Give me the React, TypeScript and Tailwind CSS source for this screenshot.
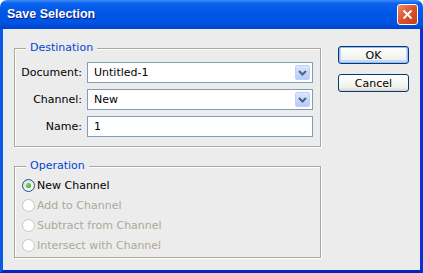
import React from "react";

const face = "font-['DejaVu_Sans',sans-serif] text-[11px] leading-[13px]";

function GroupBox({
  title,
  className,
  children,
}: {
  title: string;
  className: string;
  children: React.ReactNode;
}) {
  return (
    <div
      className={`relative border border-[#aca899] shadow-[inset_1px_1px_0_#ffffff,1px_1px_0_#ffffff] ${className}`}
    >
      <span className="absolute left-[11px] -top-[8px] bg-[#ececec] px-[4px] text-[#0046d5]">
        {title}
      </span>
      {children}
    </div>
  );
}

function ComboBox({ value }: { value: string }) {
  return (
    <div className="relative flex h-[21px] w-[226px] items-center border border-[#7f9db9] bg-white pl-[6px]">
      {value}
      <div className="absolute right-[2px] top-[2px] bottom-[2px] flex w-[15px] items-center justify-center rounded-[2px] border border-[#bcd0f8] bg-[linear-gradient(to_bottom,#dce6fd,#b7cbf8)]">
        <svg width="9" height="6" viewBox="0 0 9 6">
          <path d="M1 1 L4.5 4.5 L8 1" fill="none" stroke="#4d6185" strokeWidth="2" />
        </svg>
      </div>
    </div>
  );
}

function Field({ label, children }: { label: string; children: React.ReactNode }) {
  return (
    <div className="flex items-center gap-[5px]">
      <div className="w-[67px] text-right">{label}</div>
      {children}
    </div>
  );
}

function Radio({ label, checked, disabled }: { label: string; checked?: boolean; disabled?: boolean }) {
  return (
    <div className={`flex h-[20px] items-center gap-[2px] ${disabled ? "text-[#aca899]" : "text-black"}`}>
      <div
        className={`flex h-[13px] w-[13px] items-center justify-center rounded-full border ${
          disabled
            ? "border-[#cac8bb] bg-white"
            : "border-[#1c5180] bg-[linear-gradient(135deg,#dcdcd6,#ffffff)]"
        }`}
      >
        {checked && (
          <div className="h-[5px] w-[5px] rounded-full bg-[radial-gradient(circle_at_35%_35%,#71e070,#21a121)]" />
        )}
      </div>
      <span>{label}</span>
    </div>
  );
}

function Button({ label, primary }: { label: string; primary?: boolean }) {
  return (
    <div
      className={`flex h-[18px] w-[71px] items-center justify-center rounded-[3px] border border-[#003c74] bg-[linear-gradient(to_bottom,#ffffff,#f0f0ea_80%,#d6d0c5)] ${
        primary ? "shadow-[inset_0_0_0_1px_#9bb8f3,inset_0_-1px_0_2px_#c5d8fa]" : ""
      }`}
    >
      {label}
    </div>
  );
}

export default function App() {
  return (
    <div className={`flex h-[273px] w-[423px] flex-col ${face}`}>
      <div className="flex h-[29px] shrink-0 items-center justify-between rounded-t-[7px] bg-[linear-gradient(to_bottom,#3d8ef7_0%,#0a62ee_12%,#0056e6_45%,#0054e3_80%,#0042cc_100%)] pl-[7px] pr-[5px]">
        <span className="font-['Liberation_Sans',sans-serif] text-[12.5px] font-bold text-white [text-shadow:1px_1px_0_#0a1883]">
          Save Selection
        </span>
        <div className="flex h-[21px] w-[21px] items-center justify-center rounded-[3px] border border-white bg-[linear-gradient(135deg,#ef8a6c,#d9522b_50%,#c2401c)]">
          <svg width="11" height="11" viewBox="0 0 11 11">
            <path d="M1.5 1.5 L9.5 9.5 M9.5 1.5 L1.5 9.5" stroke="#ffffff" strokeWidth="2" />
          </svg>
        </div>
      </div>
      <div className="flex flex-1 border-x-[3px] border-b-[3px] border-l-[#0b5ae6] border-r-[#0831d9] border-b-[#0028c0] bg-[#ececec]">
        <div className="flex flex-col pl-[11px] pt-[19px]">
          <GroupBox title="Destination" className="h-[99px] w-[307px] pt-[13px]">
            <div className="flex flex-col gap-[6px]">
              <Field label="Document:">
                <ComboBox value="Untitled-1" />
              </Field>
              <Field label="Channel:">
                <ComboBox value="New" />
              </Field>
              <Field label="Name:">
                <div className="flex h-[21px] w-[226px] items-center border border-[#7f9db9] bg-white pl-[6px]">
                  1
                </div>
              </Field>
            </div>
          </GroupBox>
          <GroupBox title="Operation" className="mt-[19px] h-[92px] w-[307px] pl-[7px] pt-[8px]">
            <Radio label="New Channel" checked />
            <Radio label="Add to Channel" disabled />
            <Radio label="Subtract from Channel" disabled />
            <Radio label="Intersect with Channel" disabled />
          </GroupBox>
        </div>
        <div className="flex flex-col gap-[10px] pl-[17px] pt-[17px]">
          <Button label="OK" primary />
          <Button label="Cancel" />
        </div>
      </div>
    </div>
  );
}
